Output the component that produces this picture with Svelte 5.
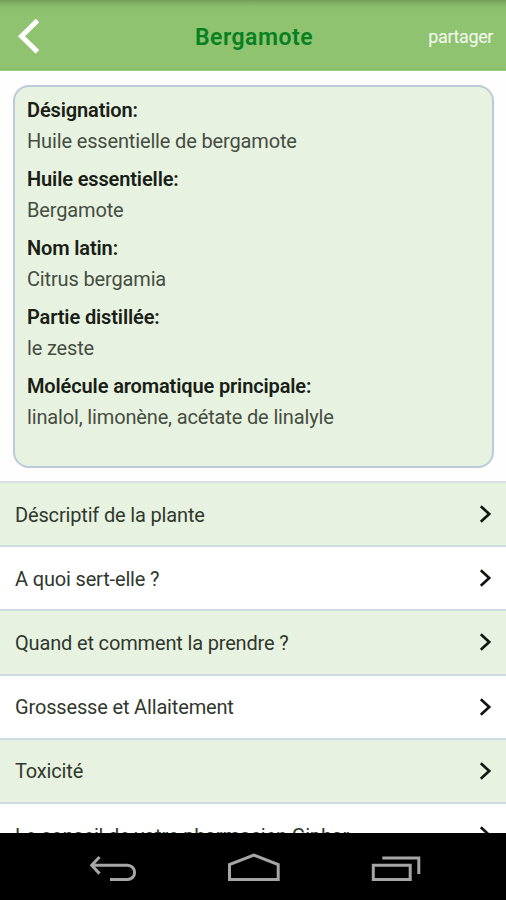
<script>
  const details = [
    { label: 'Désignation:', value: 'Huile essentielle de bergamote' },
    { label: 'Huile essentielle:', value: 'Bergamote' },
    { label: 'Nom latin:', value: 'Citrus bergamia' },
    { label: 'Partie distillée:', value: 'le zeste' },
    { label: 'Molécule aromatique principale:', value: 'linalol, limonène, acétate de linalyle' }
  ];
  const sections = [
    'Déscriptif de la plante',
    'A quoi sert-elle ?',
    'Quand et comment la prendre ?',
    'Grossesse et Allaitement',
    'Toxicité',
    'Le conseil de votre pharmacien Giphar'
  ];
</script>

<div class="screen">
  <header>
    <button class="back" aria-label="Retour">
      <svg width="24" height="36" viewBox="0 0 24 36"><path d="M22.5 1.5 6.5 17.2 22.5 32.9" fill="none" stroke="#fff" stroke-width="5" /></svg>
    </button>
    <h1>Bergamote</h1>
    <button class="share">partager</button>
  </header>
  <main>
    <dl class="card">
      {#each details as d}
        <dt>{d.label}</dt>
        <dd>{d.value}</dd>
      {/each}
    </dl>
    <ul>
      {#each sections as s}
        <li>
          <span>{s}</span>
          <svg width="13" height="18" viewBox="0 0 13 18"><path d="M1.8 1.2 10.2 9 1.8 16.8" fill="none" stroke="#10170e" stroke-width="2.7" /></svg>
        </li>
      {/each}
    </ul>
  </main>
  <nav>
    <svg width="506" height="67" viewBox="0 0 506 67" fill="none" stroke="#a6a6a6" stroke-width="3">
      <path d="M99.5 24 91.7 32.3 99.5 40.6M92 32.3H127.5A7.1 7.1 0 0 1 127.5 46.5H110" />
      <path d="M229.5 46.5V31.5L253.8 22 278.2 31.5V46.5Z" />
      <path d="M373.3 32.2H410.2V46.5H373.3ZM382.3 25H418.8V41" />
    </svg>
  </nav>
</div>

<style>
  .screen {
    width: 506px;
    height: 900px;
    display: flex;
    flex-direction: column;
    overflow: hidden;
    background: #fefefe;
    font-family: Roboto, "Liberation Sans", sans-serif;
    color: #30382d;
  }
  header {
    flex: none;
    box-sizing: border-box;
    height: 71px;
    padding: 3px 13px 0 15px;
    display: grid;
    grid-template-columns: 80px 1fr 80px;
    align-items: center;
    background: linear-gradient(#739d58 0, #82b064 3px, #8bbf6b 7px, #8fc370 16px, #8fc370 68px, #83bc62 70px, #b5d8a0 71px);
  }
  button {
    padding: 0;
    border: 0;
    background: none;
    font-family: inherit;
  }
  .back {
    display: flex;
  }
  h1 {
    margin: 0;
    padding-top: 2px;
    text-align: center;
    font-size: 23px;
    font-weight: 600;
    line-height: 30px;
    letter-spacing: 0.5px;
    color: #078022;
  }
  .share {
    justify-self: end;
    font-size: 18px;
    line-height: 24px;
    letter-spacing: -0.4px;
    color: #f4fbef;
  }
  main {
    flex: 1;
    min-height: 0;
    overflow: hidden;
  }
  .card {
    box-sizing: border-box;
    height: 383px;
    margin: 14px 12px 13px 13px;
    padding: 8px 12px;
    border: 2px solid #bccad9;
    border-radius: 16px;
    background: #e8f2e1;
    font-size: 20px;
    line-height: 31px;
  }
  dt {
    font-weight: 600;
    letter-spacing: -0.13px;
    color: #182016;
  }
  dd {
    margin: 0 0 7px;
    letter-spacing: -0.15px;
    color: #454d41;
    white-space: nowrap;
  }
  ul {
    margin: 0;
    padding: 0;
    list-style: none;
    border-top: 2px solid #d7e0e3;
  }
  li {
    box-sizing: border-box;
    height: 64.2px;
    padding: 0 14px 0 15px;
    display: flex;
    align-items: center;
    justify-content: space-between;
    border-bottom: 2px solid #cfdbe2;
    background: #fff;
    font-size: 20px;
    line-height: 30px;
    letter-spacing: -0.16px;
  }
  li span {
    padding-top: 1px;
  }
  li:nth-child(odd) {
    background: #e8f2e1;
  }
  nav {
    flex: none;
    height: 67px;
    background: #000;
  }
  nav svg {
    display: block;
  }
</style>
